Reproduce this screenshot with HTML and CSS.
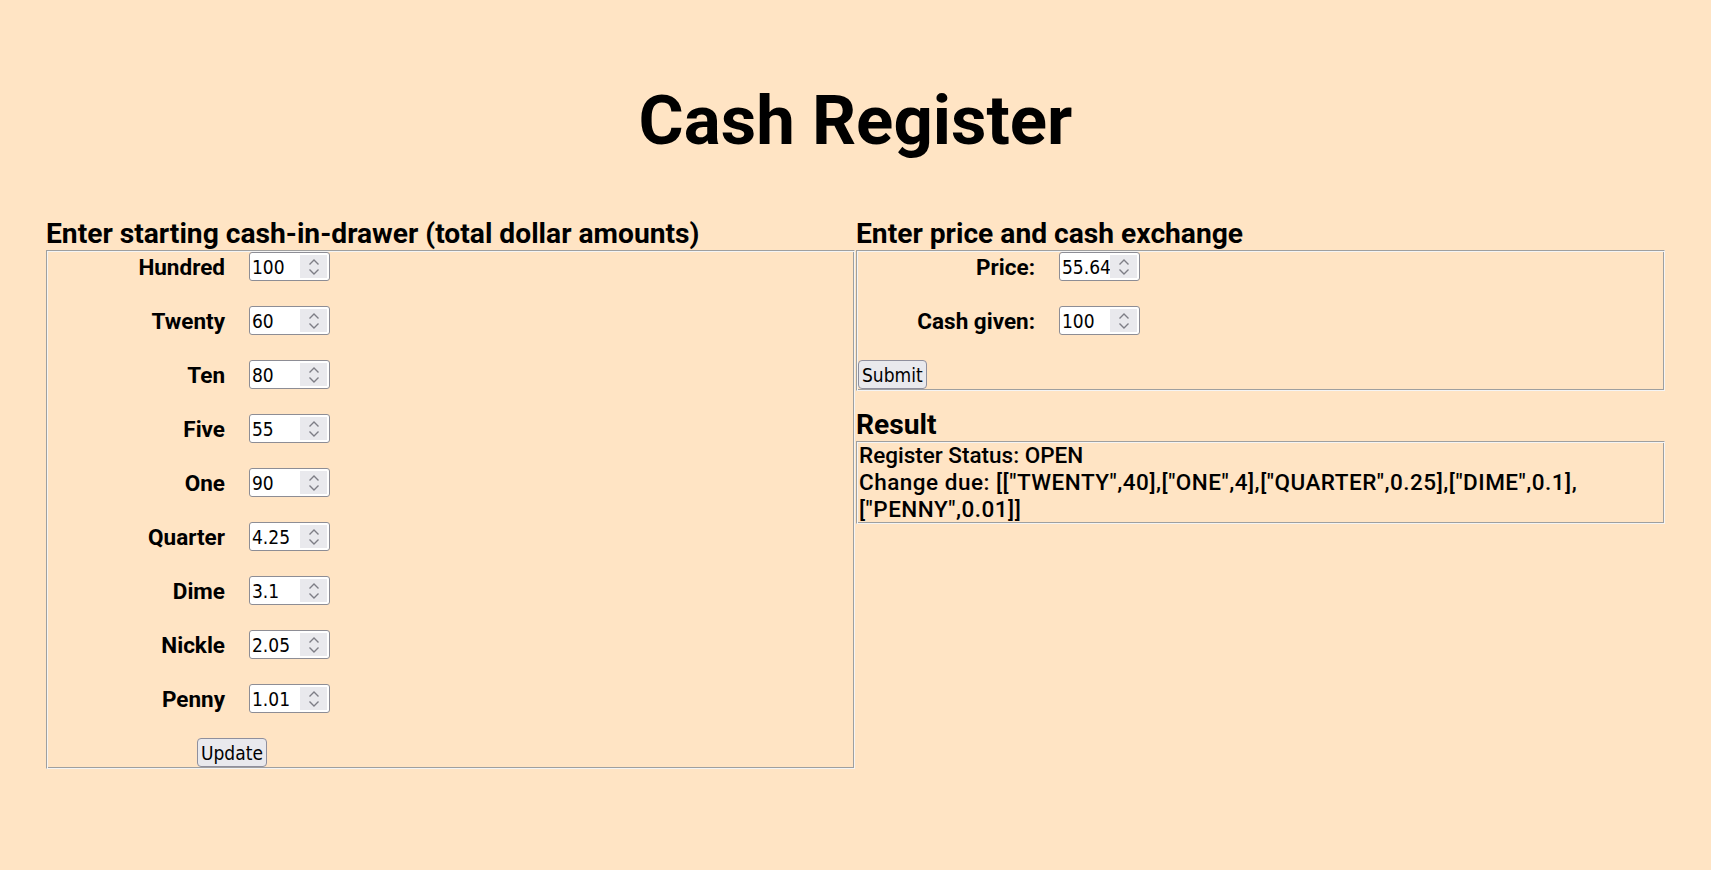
FILE: index.html
```html
<!DOCTYPE html>
<html lang="en">
<head>
<meta charset="utf-8">
<title>Cash Register</title>
<link rel="stylesheet" href="styles.css">
</head>
<body>
<h1 class="title">Cash Register</h1>
<main class="cols">
  <section class="col">
    <h2 class="heading">Enter starting cash-in-drawer (total dollar amounts)</h2>
    <div class="box">
      <div class="row"><label class="lbl">Hundred</label><span class="num"><input type="number" value="100"><span class="spin"><svg width="12" height="18" viewBox="0 0 12 18"><path d="M1.5 6.5 L6 2 L10.5 6.5 M1.5 11.5 L6 16 L10.5 11.5" fill="none" stroke="#7e7e86" stroke-width="1.4"/></svg></span></span></div>
      <div class="row"><label class="lbl">Twenty</label><span class="num"><input type="number" value="60"><span class="spin"><svg width="12" height="18" viewBox="0 0 12 18"><path d="M1.5 6.5 L6 2 L10.5 6.5 M1.5 11.5 L6 16 L10.5 11.5" fill="none" stroke="#7e7e86" stroke-width="1.4"/></svg></span></span></div>
      <div class="row"><label class="lbl">Ten</label><span class="num"><input type="number" value="80"><span class="spin"><svg width="12" height="18" viewBox="0 0 12 18"><path d="M1.5 6.5 L6 2 L10.5 6.5 M1.5 11.5 L6 16 L10.5 11.5" fill="none" stroke="#7e7e86" stroke-width="1.4"/></svg></span></span></div>
      <div class="row"><label class="lbl">Five</label><span class="num"><input type="number" value="55"><span class="spin"><svg width="12" height="18" viewBox="0 0 12 18"><path d="M1.5 6.5 L6 2 L10.5 6.5 M1.5 11.5 L6 16 L10.5 11.5" fill="none" stroke="#7e7e86" stroke-width="1.4"/></svg></span></span></div>
      <div class="row"><label class="lbl">One</label><span class="num"><input type="number" value="90"><span class="spin"><svg width="12" height="18" viewBox="0 0 12 18"><path d="M1.5 6.5 L6 2 L10.5 6.5 M1.5 11.5 L6 16 L10.5 11.5" fill="none" stroke="#7e7e86" stroke-width="1.4"/></svg></span></span></div>
      <div class="row"><label class="lbl">Quarter</label><span class="num"><input type="number" value="4.25"><span class="spin"><svg width="12" height="18" viewBox="0 0 12 18"><path d="M1.5 6.5 L6 2 L10.5 6.5 M1.5 11.5 L6 16 L10.5 11.5" fill="none" stroke="#7e7e86" stroke-width="1.4"/></svg></span></span></div>
      <div class="row"><label class="lbl">Dime</label><span class="num"><input type="number" value="3.1"><span class="spin"><svg width="12" height="18" viewBox="0 0 12 18"><path d="M1.5 6.5 L6 2 L10.5 6.5 M1.5 11.5 L6 16 L10.5 11.5" fill="none" stroke="#7e7e86" stroke-width="1.4"/></svg></span></span></div>
      <div class="row"><label class="lbl">Nickle</label><span class="num"><input type="number" value="2.05"><span class="spin"><svg width="12" height="18" viewBox="0 0 12 18"><path d="M1.5 6.5 L6 2 L10.5 6.5 M1.5 11.5 L6 16 L10.5 11.5" fill="none" stroke="#7e7e86" stroke-width="1.4"/></svg></span></span></div>
      <div class="row"><label class="lbl">Penny</label><span class="num"><input type="number" value="1.01"><span class="spin"><svg width="12" height="18" viewBox="0 0 12 18"><path d="M1.5 6.5 L6 2 L10.5 6.5 M1.5 11.5 L6 16 L10.5 11.5" fill="none" stroke="#7e7e86" stroke-width="1.4"/></svg></span></span></div>
      <button class="btn btn-update" type="button">Update</button>
    </div>
  </section>
  <section class="col">
    <h2 class="heading">Enter price and cash exchange</h2>
    <div class="box">
      <div class="row"><label class="lbl">Price:</label><span class="num"><input type="number" value="55.64"><span class="spin"><svg width="12" height="18" viewBox="0 0 12 18"><path d="M1.5 6.5 L6 2 L10.5 6.5 M1.5 11.5 L6 16 L10.5 11.5" fill="none" stroke="#7e7e86" stroke-width="1.4"/></svg></span></span></div>
      <div class="row"><label class="lbl">Cash given:</label><span class="num"><input type="number" value="100"><span class="spin"><svg width="12" height="18" viewBox="0 0 12 18"><path d="M1.5 6.5 L6 2 L10.5 6.5 M1.5 11.5 L6 16 L10.5 11.5" fill="none" stroke="#7e7e86" stroke-width="1.4"/></svg></span></span></div>
      <button class="btn btn-submit" type="button">Submit</button>
    </div>
    <h2 class="heading heading-result">Result</h2>
    <div class="box result">
      <div>Register Status: OPEN</div>
      <div class="change">Change due: [["TWENTY",40],["ONE",4],["QUARTER",0.25],["DIME",0.1],<br>["PENNY",0.01]]</div>
    </div>
  </section>
</main>
</body>
</html>
```

FILE: styles.css
```css
html, body {
  margin: 0;
  padding: 0;
}

body {
  background: #ffe4c4;
  color: #000;
  font-family: Roboto, "Liberation Sans", sans-serif;
  min-height: 870px;
}

.title {
  margin: 86px 0 0;
  font-size: 69px;
  line-height: 70px;
  font-weight: 700;
  text-align: center;
}

.cols {
  display: grid;
  grid-template-columns: 1fr 1fr;
  column-gap: 1px;
  margin: 62px 46px 0;
  align-items: start;
}

.col {
  display: flex;
  flex-direction: column;
}

.heading {
  margin: 0;
  font-size: 28.2px;
  line-height: 32px;
  font-weight: 700;
}

.heading-result {
  margin-top: 18px;
}

.box {
  border: 1px solid;
  border-color: #9f9f9f #f4f4f4 #f4f4f4 #9f9f9f;
  box-shadow: inset 1px 1px 0 #f4f4f4, inset -1px -1px 0 #9f9f9f;
  padding: 1px;
}

.row {
  display: flex;
  align-items: center;
  gap: 24px;
  margin-bottom: 25px;
}

.lbl {
  width: 177px;
  text-align: right;
  font-size: 22.5px;
  font-weight: 700;
}

.num {
  display: inline-flex;
  box-sizing: border-box;
  width: 81px;
  height: 29px;
  padding: 2px 2px 2px 0;
  background: #fff;
  border: 1px solid #8d8d95;
  border-radius: 3px;
}

.num input {
  flex: 1;
  min-width: 0;
  border: 0;
  margin: 0;
  padding: 0 0 0 2px;
  background: transparent;
  font-family: "DejaVu Sans Condensed", "DejaVu Sans", sans-serif;
  font-stretch: condensed;
  font-size: 19px;
  color: #000;
  outline: none;
  -moz-appearance: textfield;
}

.num input::-webkit-inner-spin-button,
.num input::-webkit-outer-spin-button {
  -webkit-appearance: none;
  margin: 0;
}

.spin {
  width: 27px;
  background: #e9e9ed;
  display: flex;
  align-items: center;
  justify-content: center;
}

.btn {
  box-sizing: border-box;
  height: 29px;
  padding: 0 3px;
  font-family: "DejaVu Sans Condensed", "DejaVu Sans", sans-serif;
  font-stretch: condensed;
  font-size: 19px;
  color: #000;
  background: #e9e9ed;
  border: 1px solid #8f8f9d;
  border-radius: 4px;
  align-self: flex-start;
}

.btn-update {
  margin-left: 149px;
}

.btn-submit {
  margin-left: 0;
}

.result {
  padding: 0 2px;
  font-size: 22.5px;
  line-height: 27px;
  font-weight: 500;
}

.change {
  letter-spacing: 0.5px;
}
```
